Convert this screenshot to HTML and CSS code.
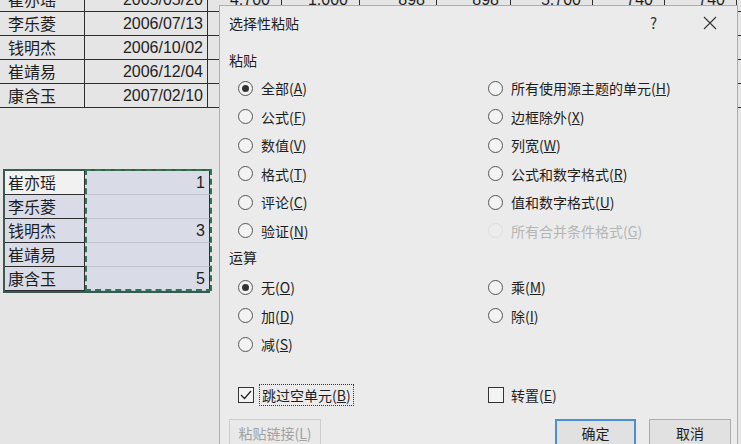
FILE: index.html
```html
<!DOCTYPE html>
<html lang="zh-CN">
<head>
    <meta charset="UTF-8">
    <title>选择性粘贴</title>
    <link rel="stylesheet" href="styles.css">
</head>
<body>

    <div class="sheet">
        <div class="rows top">
            <div class="row wide">
                <div class="cell name">崔亦瑶</div>
                <div class="cell num">2005/05/20</div>
                <div class="cell val">4,700</div>
                <div class="cell val">1,000</div>
                <div class="cell val">898</div>
                <div class="cell val">898</div>
                <div class="cell val">5,700</div>
                <div class="cell val">740</div>
                <div class="cell val">740</div>
                <div class="cell"></div>
            </div>
            <div class="row wide">
                <div class="cell name">李乐菱</div>
                <div class="cell num">2006/07/13</div>
                <div class="cell"></div><div class="cell"></div><div class="cell"></div><div class="cell"></div>
                <div class="cell"></div><div class="cell"></div><div class="cell"></div><div class="cell"></div>
            </div>
            <div class="row wide">
                <div class="cell name">钱明杰</div>
                <div class="cell num">2006/10/02</div>
                <div class="cell"></div><div class="cell"></div><div class="cell"></div><div class="cell"></div>
                <div class="cell"></div><div class="cell"></div><div class="cell"></div><div class="cell"></div>
            </div>
            <div class="row wide">
                <div class="cell name">崔靖易</div>
                <div class="cell num">2006/12/04</div>
                <div class="cell"></div><div class="cell"></div><div class="cell"></div><div class="cell"></div>
                <div class="cell"></div><div class="cell"></div><div class="cell"></div><div class="cell"></div>
            </div>
            <div class="row wide">
                <div class="cell name">康含玉</div>
                <div class="cell num">2007/02/10</div>
                <div class="cell"></div><div class="cell"></div><div class="cell"></div><div class="cell"></div>
                <div class="cell"></div><div class="cell"></div><div class="cell"></div><div class="cell"></div>
            </div>
        </div>

        <div class="rows pasted">
            <div class="row pair">
                <div class="cell name active">崔亦瑶</div>
                <div class="cell num sel">1</div>
            </div>
            <div class="row pair">
                <div class="cell name sel">李乐菱</div>
                <div class="cell num sel"></div>
            </div>
            <div class="row pair">
                <div class="cell name sel">钱明杰</div>
                <div class="cell num sel">3</div>
            </div>
            <div class="row pair">
                <div class="cell name sel">崔靖易</div>
                <div class="cell num sel"></div>
            </div>
            <div class="row pair">
                <div class="cell name sel">康含玉</div>
                <div class="cell num sel">5</div>
            </div>
            <div class="marquee"></div>
        </div>
    </div>

    <div class="dialog">
        <div class="titlebar">
            <span class="title">选择性粘贴</span>
            <span class="help">?</span>
            <svg class="close" width="14" height="14" viewBox="0 0 14 14">
                <path d="M1 1 L13 13 M13 1 L1 13" stroke="#333" stroke-width="1.1" fill="none"/>
            </svg>
        </div>

        <div class="content">
            <div class="group-label first">粘贴</div>
            <div class="options">
                <div class="opt"><span class="radio on"></span>全部(<u>A</u>)</div>
                <div class="opt"><span class="radio"></span>所有使用源主题的单元(<u>H</u>)</div>
                <div class="opt"><span class="radio"></span>公式(<u>F</u>)</div>
                <div class="opt"><span class="radio"></span>边框除外(<u>X</u>)</div>
                <div class="opt"><span class="radio"></span>数值(<u>V</u>)</div>
                <div class="opt"><span class="radio"></span>列宽(<u>W</u>)</div>
                <div class="opt"><span class="radio"></span>格式(<u>T</u>)</div>
                <div class="opt"><span class="radio"></span>公式和数字格式(<u>R</u>)</div>
                <div class="opt"><span class="radio"></span>评论(<u>C</u>)</div>
                <div class="opt"><span class="radio"></span>值和数字格式(<u>U</u>)</div>
                <div class="opt"><span class="radio"></span>验证(<u>N</u>)</div>
                <div class="opt disabled"><span class="radio"></span>所有合并条件格式(<u>G</u>)</div>
            </div>

            <div class="group-label second">运算</div>
            <div class="options ops">
                <div class="opt"><span class="radio on"></span>无(<u>O</u>)</div>
                <div class="opt"><span class="radio"></span>乘(<u>M</u>)</div>
                <div class="opt"><span class="radio"></span>加(<u>D</u>)</div>
                <div class="opt"><span class="radio"></span>除(<u>I</u>)</div>
                <div class="opt"><span class="radio"></span>减(<u>S</u>)</div>
            </div>

            <div class="checks">
                <div class="check">
                    <span class="box">
                        <svg width="14" height="14" viewBox="0 0 14 14">
                            <path d="M2 7 L5.5 10.5 L12 3" stroke="#222" stroke-width="1.2" fill="none"/>
                        </svg>
                    </span>
                    <span class="focus">跳过空单元(<u>B</u>)</span>
                </div>
                <div class="check">
                    <span class="box"></span>
                    <span class="plain">转置(<u>E</u>)</span>
                </div>
            </div>

            <div class="buttons">
                <button class="btn link" disabled>粘贴链接(<u>L</u>)</button>
                <button class="btn ok">确定</button>
                <button class="btn">取消</button>
            </div>
        </div>
    </div>

</body>
</html>
```

FILE: styles.css
```css
* {
    box-sizing: border-box;
}

body {
    margin: 0;
    width: 741px;
    height: 444px;
    overflow: hidden;
    position: relative;
    background: #e5e5e5;
    font-family: "Noto Sans CJK SC", sans-serif;
    color: #1e1e1e;
}

/* spreadsheet behind the dialog */
.top {
    margin-top: -12px;
}

.row {
    display: grid;
    height: 24px;
}

.row.wide {
    grid-template-columns: 85px 123px 74px 78px 77px 74px 82px 72px 72px 30px;
    width: 767px;
}

.cell {
    border-right: 1px solid #2e2e2e;
    border-bottom: 1px solid #2e2e2e;
    font-size: 16px;
    line-height: 23px;
    white-space: nowrap;
    overflow: hidden;
}

.cell.name {
    padding-left: 8px;
    font-family: "Noto Sans CJK SC", sans-serif;
}

.cell.num {
    text-align: right;
    padding-right: 4px;
    font-family: "Liberation Sans", Arial, sans-serif;
}

.cell.val {
    text-align: right;
    padding-right: 11px;
    font-family: "Liberation Sans", Arial, sans-serif;
}

.pasted {
    position: relative;
    margin: 61px 0 0 3px;
    width: 207px;
    border-top: 2px solid #3b5a4f;
    border-left: 2px solid #3b5a4f;
    border-bottom: 2px solid #3b5a4f;
}

.pasted .row {
    grid-template-columns: 80px 125px;
}

.pasted .row:last-of-type .cell {
    border-bottom: none;
    height: 22px;
}

.pasted .cell.name {
    padding-left: 3px;
}

.pasted .cell.num {
    padding-right: 4px;
    border-bottom-color: #c3c5d3;
}

.cell.sel {
    background: #d9dbe7;
}

.cell.active {
    background: #f1f1f1;
}

.marquee {
    position: absolute;
    left: 80px;
    top: -2px;
    width: 127px;
    height: 122px;
    border: 2px dashed #2c7656;
}

/* dialog */
.dialog {
    position: absolute;
    left: 219px;
    top: 5px;
    width: 519px;
    height: 470px;
    background: #ebebeb;
    border: 1px solid #9fb0c2;
    font-size: 14px;
}

.titlebar {
    display: flex;
    align-items: center;
    height: 33px;
    padding: 0 20px 0 9px;
}

.title {
    flex: 1;
}

.help {
    font-size: 15px;
    color: #333;
    margin-right: 46px;
}

.content {
    padding: 0 6px 0 9px;
}

.group-label {
    line-height: 20px;
}

.group-label.first {
    margin-top: 11px;
}

.group-label.second {
    margin-top: 2px;
}

.options {
    display: grid;
    grid-template-columns: 250px 1fr;
    grid-auto-rows: 28.5px;
    margin: 4px 0 0 9px;
}

.options.ops {
    margin-top: 6px;
}

.opt {
    display: flex;
    align-items: center;
    white-space: nowrap;
}

.opt.disabled {
    color: #b5b5b5;
}

.radio {
    width: 15px;
    height: 15px;
    border: 1px solid #555;
    border-radius: 50%;
    background: #f3f3f3;
    display: inline-flex;
    align-items: center;
    justify-content: center;
    margin-right: 8px;
    flex: none;
}

.radio.on::after {
    content: "";
    width: 7px;
    height: 7px;
    border-radius: 50%;
    background: #333;
}

.disabled .radio {
    border-color: #dedede;
    background: #ececec;
}

.checks {
    display: grid;
    grid-template-columns: 250px 1fr;
    height: 22px;
    margin: 25px 0 0 9px;
}

.check {
    display: flex;
    align-items: center;
    white-space: nowrap;
}

.box {
    width: 16px;
    height: 16px;
    border: 1px solid #333;
    background: #f3f3f3;
    display: inline-flex;
    align-items: center;
    justify-content: center;
    flex: none;
}

.focus {
    margin-left: 5px;
    padding: 0 2px;
    line-height: 20px;
    border: 1px dotted #333;
}

.plain {
    margin-left: 7px;
}

.buttons {
    display: flex;
    gap: 13px;
    margin-top: 13px;
}

.btn {
    height: 28px;
    width: 82px;
    font-family: "Noto Sans CJK SC", sans-serif;
    font-size: 14px;
    color: #1e1e1e;
    background: #e1e1e1;
    border: 1px solid #adadad;
    padding: 0;
}

.btn.link {
    width: 92px;
    color: #a2a2a2;
    background: #e9e9e9;
    border-color: #cdcdcd;
}

.btn.ok {
    margin-left: auto;
    width: 81px;
    border: 2px solid #4a8fd0;
}
```
